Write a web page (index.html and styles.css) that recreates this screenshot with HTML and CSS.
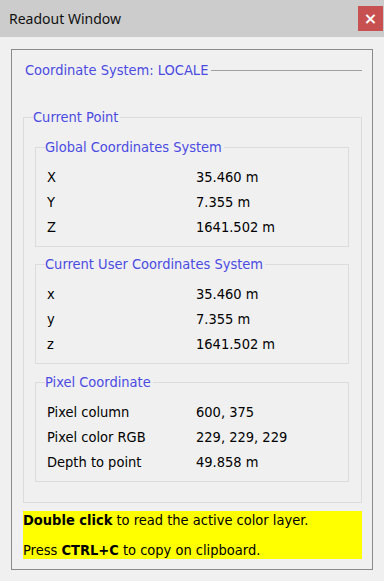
FILE: index.html
```html
<!DOCTYPE html>
<html lang="en">
<head>
<meta charset="utf-8">
<title>Readout Window</title>
<link rel="stylesheet" href="styles.css">
</head>
<body>
    <div class="titlebar">
        <span class="title">Readout Window</span>
        <button type="button" class="close">&#215;</button>
    </div>

    <div class="panel">
        <div class="system">
            <span class="system-name">Coordinate System: LOCALE</span>
            <span class="rule"></span>
        </div>

        <fieldset class="group current">
            <legend>Current Point</legend>

            <fieldset class="group sub">
                <legend>Global Coordinates System</legend>
                <div class="row"><span>X</span><span>35.460 m</span></div>
                <div class="row"><span>Y</span><span>7.355 m</span></div>
                <div class="row"><span>Z</span><span>1641.502 m</span></div>
            </fieldset>

            <fieldset class="group sub">
                <legend>Current User Coordinates System</legend>
                <div class="row"><span>x</span><span>35.460 m</span></div>
                <div class="row"><span>y</span><span>7.355 m</span></div>
                <div class="row"><span>z</span><span>1641.502 m</span></div>
            </fieldset>

            <fieldset class="group sub pixel">
                <legend>Pixel Coordinate</legend>
                <div class="row"><span>Pixel column</span><span>600, 375</span></div>
                <div class="row"><span>Pixel color RGB</span><span>229, 229, 229</span></div>
                <div class="row"><span>Depth to point</span><span>49.858 m</span></div>
            </fieldset>
        </fieldset>

        <div class="hint">
            <p><b>Double click</b> to read the active color layer.</p>
            <p class="second">Press <b>CTRL+C</b> to copy on clipboard.</p>
        </div>
    </div>
</body>
</html>
```

FILE: styles.css
```css
html, body {
    margin: 0;
    background: #f0f0f0;
    font-family: "DejaVu Sans Condensed", "DejaVu Sans", sans-serif;
    font-stretch: condensed;
    font-size: 14.5px;
    color: #000;
}

.titlebar {
    height: 37px;
    background: #cccccc;
    display: flex;
    align-items: center;
    justify-content: space-between;
}

.title {
    margin-left: 9px;
    font-family: "Noto Sans", sans-serif;
    font-stretch: normal;
    font-size: 14px;
    color: #111;
}

.close {
    width: 25px;
    height: 25px;
    margin-right: 1px;
    border: none;
    padding: 0;
    background: #c75050;
    color: #fff;
    font-family: "DejaVu Sans", sans-serif;
    font-weight: bold;
    font-size: 16px;
    line-height: 25px;
}

.panel {
    box-sizing: border-box;
    width: 362px;
    height: 521px;
    margin: 12px 0 0 11px;
    padding: 11px 10px 0 11px;
    border: 1px solid #8a8a8a;
}

.system {
    display: flex;
    align-items: center;
    height: 18px;
    color: #4b4be2;
}

.system-name {
    padding-left: 2px;
    line-height: 18px;
}

.rule {
    flex: 1;
    height: 1px;
    margin-left: 3px;
    background: #a0a0a0;
}

.group {
    margin: 0;
    border: 1px solid #dcdcdc;
    min-width: 0;
}

.group legend {
    margin-left: -2px;
    padding: 0 2px 0 0;
    line-height: 18px;
    color: #4b4be2;
}

.current {
    margin-top: 29px;
    padding: 12px 12px 20px 11px;
}

.sub {
    padding: 9px 0 6px 11px;
}

.sub + .sub {
    margin-top: 8px;
}

.sub.pixel {
    margin-top: 9px;
}

.row {
    display: grid;
    grid-template-columns: 149px 1fr;
    height: 25px;
    line-height: 25px;
}

.hint {
    margin-top: 8px;
    background: #ffff00;
    height: 48px;
}

.hint p {
    margin: 0;
    line-height: 18px;
}

.hint .second {
    margin-top: 12px;
}
```
